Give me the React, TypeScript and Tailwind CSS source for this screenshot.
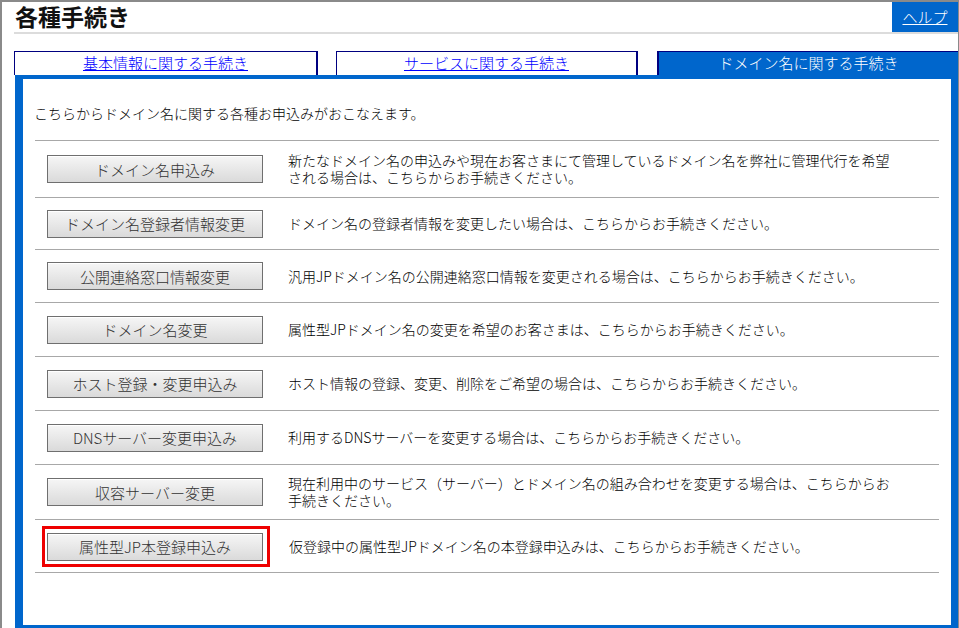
import React from "react";

type Row = {
  label: string;
  lines: string[];
  h: string;
  mark?: boolean;
};

const rows: Row[] = [
  {
    label: "ドメイン名申込み",
    lines: [
      "新たなドメイン名の申込みや現在お客さまにて管理しているドメイン名を弊社に管理代行を希望",
      "される場合は、こちらからお手続きください。",
    ],
    h: "h-[57px]",
  },
  { label: "ドメイン名登録者情報変更", lines: ["ドメイン名の登録者情報を変更したい場合は、こちらからお手続きください。"], h: "h-[52px]" },
  { label: "公開連絡窓口情報変更", lines: ["汎用JPドメイン名の公開連絡窓口情報を変更される場合は、こちらからお手続きください。"], h: "h-[53px]" },
  { label: "ドメイン名変更", lines: ["属性型JPドメイン名の変更を希望のお客さまは、こちらからお手続きください。"], h: "h-[54px]" },
  { label: "ホスト登録・変更申込み", lines: ["ホスト情報の登録、変更、削除をご希望の場合は、こちらからお手続きください。"], h: "h-[54px]" },
  { label: "DNSサーバー変更申込み", lines: ["利用するDNSサーバーを変更する場合は、こちらからお手続きください。"], h: "h-[54px]" },
  {
    label: "収容サーバー変更",
    lines: [
      "現在利用中のサービス（サーバー）とドメイン名の組み合わせを変更する場合は、こちらからお",
      "手続きください。",
    ],
    h: "h-[55px]",
  },
  {
    label: "属性型JP本登録申込み",
    lines: ["仮登録中の属性型JPドメイン名の本登録申込みは、こちらからお手続きください。"],
    h: "h-[53px]",
    mark: true,
  },
];

const ActionButton: React.FC<{ label: string }> = ({ label }) => (
  <button
    type="button"
    className="w-[216px] h-[28px] shrink-0 border border-[#6f6f6f] bg-linear-to-b from-[#f6f6f6] to-[#dadada] text-[15px] font-light text-[#333] leading-none shadow-[inset_0_1px_0_#fff]"
  >
    {label}
  </button>
);

export default function App() {
  return (
    <div
      className="w-[959px] h-[628px] overflow-hidden bg-white border-t-2 border-l-2 border-r border-[#8a8a8a] text-black"
      style={{ fontFamily: '"Noto Sans CJK JP", "Noto Sans", sans-serif' }}
    >
      {/* Header */}
      <div className="flex h-[30px] pl-[13px]">
        <h1 className="flex-1 text-[23px] font-bold leading-[28px] text-[#111]">各種手続き</h1>
        <a href="#" className="w-[66px] bg-[#0066cc] text-white text-[15px] font-light underline flex items-center justify-center">
          ヘルプ
        </a>
      </div>
      <div className="ml-[12px] h-[2px] bg-[#dcdcdc]" />

      {/* Tabs */}
      <div className="ml-[12px] mt-[17px] flex h-[24px] text-[15px] font-light leading-[22px]">
        <a href="#" className="w-[304px] border-t border-l border-r-2 border-[#000080] text-center text-[#0000ff] underline">
          基本情報に関する手続き
        </a>
        <div className="w-[18px]" />
        <a href="#" className="w-[302px] border-t border-l border-r-2 border-[#000080] text-center text-[#0000ff] underline">
          サービスに関する手続き
        </a>
        <div className="w-[19px]" />
        <div className="flex-1 border-t border-l-2 border-[#000080] bg-[#0066cc] text-center text-white">
          ドメイン名に関する手続き
        </div>
      </div>

      {/* Panel */}
      <div className="ml-[13px] border-l-8 border-t-4 border-r-[7px] border-b-4 border-[#0066cc] pt-[24px] pb-[52px] font-light">
        <p className="pl-[11px] text-[14px] leading-[20px]">こちらからドメイン名に関する各種お申込みがおこなえます。</p>
        <div className="mx-[12px] mt-[17px] border-t border-[#a8a8a8]">
          {rows.map((r) => (
            <div key={r.label} className={`flex items-center border-b border-[#a8a8a8] pl-[12px] ${r.h}`}>
              {r.mark ? (
                <div className="-ml-[5px] border-[3px] border-[#ee0000] pt-[4px] pb-[3px] pl-[2px] pr-[4px]">
                  <ActionButton label={r.label} />
                </div>
              ) : (
                <ActionButton label={r.label} />
              )}
              <div className={`${r.mark ? "ml-[19px]" : "ml-[25px]"} text-[14px] leading-[17px] whitespace-nowrap`}>
                {r.lines.map((l) => (
                  <div key={l}>{l}</div>
                ))}
              </div>
            </div>
          ))}
        </div>
      </div>
    </div>
  );
}
